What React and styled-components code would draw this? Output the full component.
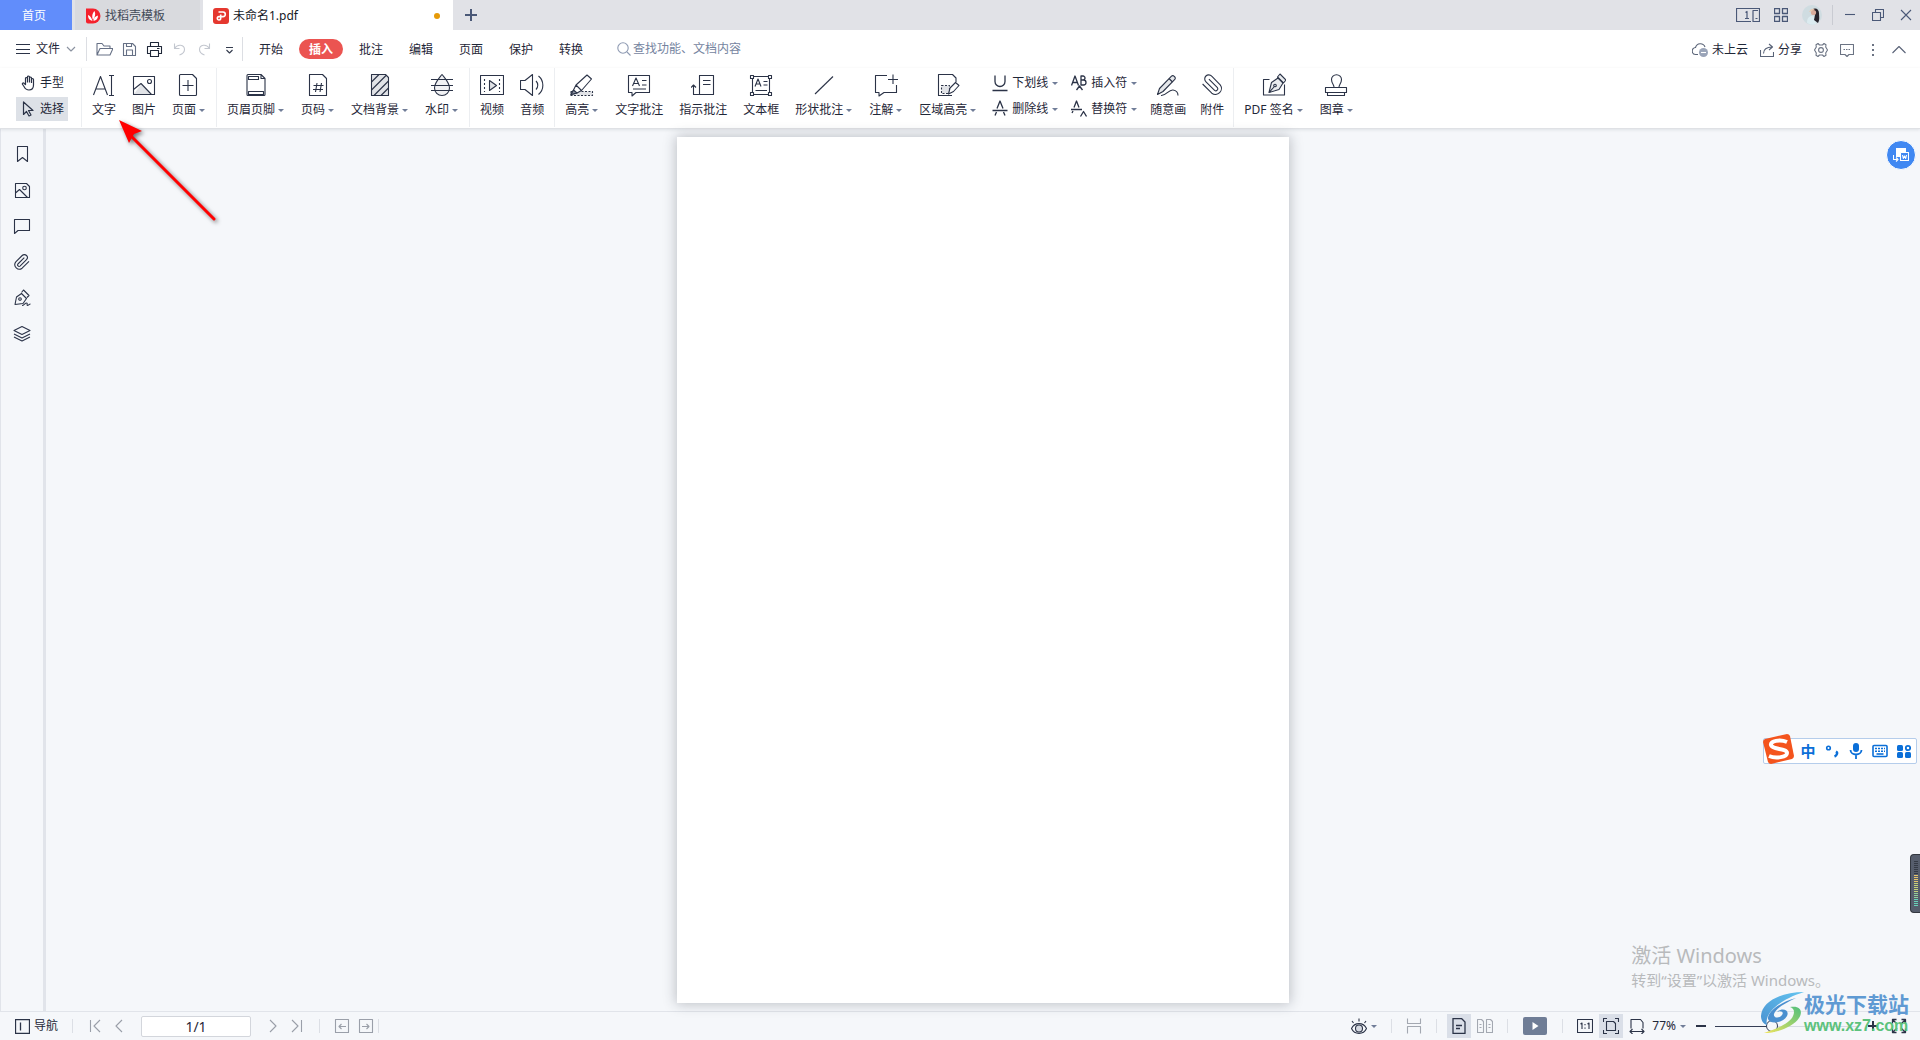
import { useState } from 'react'
import styled, { createGlobalStyle } from 'styled-components'

const GlobalStyle = createGlobalStyle`
  * {
    box-sizing: border-box;
  }

  body {
    margin: 0;
    font-family: 'Noto Sans', 'Noto Sans CJK SC', sans-serif;
    font-size: 12px;
    line-height: 18px;
    color: #1f2738;
  }

  button,
  input {
    font: inherit;
    color: inherit;
  }

  button {
    border: 0;
    padding: 0;
    background: none;
    white-space: nowrap;
    cursor: pointer;
  }
`

const Window = styled.div`
  position: relative;
  display: flex;
  flex-direction: column;
  min-height: 100vh;
  overflow: hidden;
  background: #f5f7fa;
`

const Svg = styled.svg`
  display: block;
  flex: none;
  fill: none;
  stroke: ${({ $color }) => $color || '#2b3347'};
  stroke-width: ${({ $weight }) => $weight || 1.1};
  stroke-linejoin: round;
`

const Icon = ({ w = 24, h, color, weight, children }) => (
  <Svg
    width={w}
    height={h || w}
    viewBox={`0 0 ${w} ${h || w}`}
    $color={color}
    $weight={weight}
    aria-hidden="true"
  >
    {children}
  </Svg>
)

/* title bar */

const TitleBar = styled.header`
  display: flex;
  justify-content: space-between;
  height: 30px;
  background: #e1e2e7;
`

const Tabs = styled.nav`
  display: flex;
  gap: 3px;
`

const HomeTab = styled.button`
  width: 72px;
  padding: 2px 4px 0 0;
  background: #618dfb;
  color: #fff;
`

const FileTab = styled.button`
  display: flex;
  align-items: center;
  gap: 4px;
  width: ${({ $active }) => ($active ? 250 : 125)}px;
  padding: 1px 13px 0 10px;
  background: ${({ $active }) => ($active ? '#fff' : '#d9dade')};
  color: ${({ $active }) => ($active ? '#14181f' : '#434a58')};
`

const UnsavedDot = styled.span`
  width: 6px;
  height: 6px;
  margin-left: auto;
  border-radius: 50%;
  background: #e69a08;
`

const NewTab = styled.button`
  display: grid;
  place-items: center;
  width: 30px;
`

const WindowTools = styled.div`
  display: flex;
  align-items: center;
  gap: 14px;
`

const WindowButtons = styled.div`
  display: flex;
  align-items: center;
  margin-left: -4px;
  padding-left: 3px;
  border-left: 1px solid #c9cbd2;
  height: 20px;
`

const WindowButton = styled.button`
  display: grid;
  place-items: center;
  width: 28px;
  height: 20px;
`

/* menu row */

const MenuBar = styled.div`
  display: flex;
  align-items: center;
  height: 38px;
  padding: 0 14px 0 16px;
  background: #fff;
`

const FileButton = styled.button`
  display: flex;
  align-items: center;
  gap: 6px;
`

const QuickTools = styled.div`
  display: flex;
  margin-left: 10px;
  padding-left: 5px;
  border-left: 1px solid #dcdee3;
`

const QuickButton = styled.button`
  display: grid;
  place-items: center;
  width: 25px;
  height: 24px;
`

const MenuTabs = styled.nav`
  display: flex;
  align-items: center;
  gap: 6px;
  height: 24px;
  padding-left: 6px;
  border-left: 1px solid #dcdee3;
`

const MenuTab = styled.button`
  width: 44px;
  height: 20px;
  padding-top: 1px;
  border-radius: 10px;
  background: ${({ $active }) => ($active ? '#eb5451' : 'none')};
  color: ${({ $active }) => ($active ? '#fff' : 'inherit')};
  font-weight: ${({ $active }) => ($active ? 700 : 400)};
`

const Search = styled.label`
  display: flex;
  align-items: center;
  gap: 2px;
  margin-left: 24px;
`

const SearchInput = styled.input`
  width: 180px;
  padding: 0;
  border: 0;
  outline: 0;
  background: none;

  &::placeholder {
    color: #7584a0;
    opacity: 1;
  }
`

const MenuActions = styled.div`
  display: flex;
  align-items: center;
  gap: 12px;
  margin-left: auto;
  padding-top: 1px;
`

const ActionButton = styled.button`
  display: flex;
  align-items: center;
  gap: 4px;
`

/* ribbon */

const Ribbon = styled.div`
  position: relative;
  display: flex;
  height: 61px;
  padding-left: 16px;
  background: #fff;
  border-bottom: 1px solid #dfe1e5;
  box-shadow: 0 1px 3px rgba(60, 66, 80, 0.12);
`

const RibbonSep = styled.span`
  flex: none;
  width: 1px;
  height: 59px;
  margin: 0 2px;
  background: #eceef1;
`

const ModeGroup = styled.div`
  display: flex;
  flex-direction: column;
  gap: 2px;
  width: 52px;
  margin-right: 11px;
  padding-top: 3px;
`

const ModeButton = styled.button`
  display: flex;
  align-items: center;
  gap: 4px;
  height: 24px;
  padding-left: 4px;
  background: ${({ $active }) => ($active ? '#dde1e7' : 'none')};
`

const RibbonButton = styled.button`
  display: flex;
  flex-direction: column;
  align-items: center;
  gap: 4px;
  height: 54px;
  padding-top: 5px;
  padding-left: ${({ $tight }) => ($tight ? 7 : 8)}px;
  padding-right: ${({ $menu, $tight }) => ($menu ? 9 : $tight ? 7 : 8)}px;
`

const Label = styled.span`
  display: flex;
  align-items: center;
  gap: 3px;
`

const Caret = styled.i`
  width: 0;
  height: 0;
  border: solid transparent;
  border-width: 3px 3px 0;
  border-top-color: #707d98;
`

const MarkGroup = styled.div`
  display: grid;
  grid-template-columns: auto auto;
  align-content: start;
  row-gap: 2px;
  padding-top: 3px;
`

const MarkButton = styled.button`
  display: flex;
  align-items: center;
  gap: 4px;
  height: 24px;
  padding: 0 6px 0 7px;
`

/* work area */

const Body = styled.div`
  display: flex;
  flex: 1;
`

const Sidebar = styled.aside`
  display: flex;
  flex-direction: column;
  align-items: center;
  gap: 12px;
  width: 46px;
  padding: 13px 1px 0 0;
  border-left: 1px solid #e1e4ea;
  border-right: 3px solid #e1e4ea;
`

const SideButton = styled.button`
  display: grid;
  place-items: center;
  width: 24px;
  height: 24px;
`

const Workspace = styled.main`
  position: relative;
  display: flex;
  flex: 1;
  justify-content: center;
  padding: 8px 0;
`

const Page = styled.article`
  aspect-ratio: 612 / 866;
  background: #fff;
  box-shadow: 0 0 12px 1px rgba(40, 46, 60, 0.28);
`

const ConvertButton = styled.button`
  position: absolute;
  top: 11px;
  right: 4px;
  display: grid;
  place-items: center;
  width: 30px;
  height: 30px;
  border: 1px solid #fff;
  border-radius: 50%;
  background: #4088f2;
`

/* status bar */

const StatusBar = styled.footer`
  display: flex;
  align-items: center;
  justify-content: space-between;
  height: 29px;
  padding: 0 9px 0 15px;
  border-top: 1px solid #e1e4ea;
`

const StatusGroup = styled.div`
  display: flex;
  align-items: center;
  gap: ${({ $gap }) => $gap || 0}px;
`

const StatusSep = styled.span`
  width: 1px;
  height: 14px;
  margin: 0 ${({ $space }) => $space}px;
  background: #dcdfe5;
`

const NavButton = styled.button`
  display: flex;
  align-items: center;
  gap: 4px;
  margin-right: 4px;
`

const StatusButton = styled.button`
  display: grid;
  place-items: center;
  width: 24px;
  height: 24px;
  background: ${({ $active }) => ($active ? '#dadfe8' : 'none')};
`

const MenuButton = styled.button`
  display: flex;
  align-items: center;
  gap: 4px;
  padding: 0 ${({ $space }) => $space || 0}px;
`

const PlayButton = styled.button`
  display: grid;
  place-items: center;
  width: 24px;
  height: 18px;
  margin: 0 5px;
  border-radius: 2px;
  background: #6f7d96;
`

const PageInput = styled.input`
  width: 110px;
  height: 21px;
  margin: 0 10px;
  border: 1px solid #d3d6dc;
  border-radius: 2px;
  background: #fff;
  font-size: 14px;
  text-align: center;
`

const ZoomSlider = styled.input`
  appearance: none;
  width: 144px;
  height: 14px;
  margin: 0;
  background: linear-gradient(
      to right,
      #343e55 ${({ $fill }) => $fill}%,
      #d5dae2 ${({ $fill }) => $fill}%
    )
    center / 100% 1px no-repeat;

  &::-webkit-slider-thumb {
    appearance: none;
    width: 12px;
    height: 12px;
    border: 1px solid #343e55;
    border-radius: 50%;
    background: #f5f7fa;
  }
`

/* floating items */

const Pointer = styled.svg`
  position: absolute;
  top: 114px;
  left: 112px;
  pointer-events: none;
  filter: drop-shadow(2px 2px 2px rgba(0, 0, 0, 0.55));
`

const Activation = styled.div`
  position: absolute;
  right: 90px;
  bottom: 49px;
  color: #b8babc;
  font-size: 15px;
  line-height: 22px;
  pointer-events: none;
`

const ActivationTitle = styled.div`
  font-size: 20px;
  line-height: 27px;
`

const SiteMark = styled.div`
  position: absolute;
  right: 11px;
  bottom: 5px;
  display: flex;
  align-items: center;
  pointer-events: none;
`

const SiteName = styled.div`
  color: #5f9ad3;
  font-size: 21px;
  font-weight: 700;
  line-height: 26px;
`

const SiteUrl = styled.div`
  color: #5cc27c;
  font-family: 'Liberation Sans', sans-serif;
  font-size: 16px;
  font-weight: 700;
  line-height: 18px;
`

const InputBar = styled.div`
  position: absolute;
  right: 3px;
  bottom: 276px;
  display: flex;
  align-items: center;
  gap: 8px;
  height: 26px;
  padding: 0 4px 0 36px;
  border: 1px solid #b5cdeb;
  border-radius: 2px;
  background: #fff;
`

const InputLogo = styled.svg`
  position: absolute;
  left: -2px;
  top: -6px;
`

const InputButton = styled.button`
  display: grid;
  place-items: center;
  width: 16px;
  height: 20px;
  color: #0b6fd8;
  font-size: 15px;
  font-weight: 700;
`

const Meter = styled.div`
  position: absolute;
  right: 0;
  bottom: 127px;
  display: flex;
  flex-direction: column;
  gap: 1px;
  width: 10px;
  height: 59px;
  padding: 6px 2px 0 3px;
  border: 1px solid #33373f;
  border-right: 0;
  border-radius: 4px 0 0 4px;
  background: #565d6c;
`

const MeterBar = styled.span`
  height: 1px;
  background: ${({ $color }) => $color};
`

const paperclip =
  'm21.4 11-9.2 9.2a6 6 0 0 1-8.4-8.4l8.5-8.6A4 4 0 1 1 18 8.800l-8.600 8.600a2 2 0 0 1-2.800-2.800l8.500-8.500'

const icons = {
  text: (
    <path d="M1.5 22 8.5 3.5 15.5 22M4 16h9M17 2.5h5M17 22.5h5M19.5 2.5v20" />
  ),
  image: (
    <>
      <path d="M2 21 9 11.5 19 21z" fill="#e1e3e7" stroke="none" />
      <rect x="1.5" y="3.5" width="21" height="18" />
      <path d="M1.5 16.5 9 10.5l10.5 11" />
      <circle cx="17.5" cy="8.5" r="2" />
    </>
  ),
  page: (
    <path d="M3.5 1.5h12l4 4v16a1 1 0 0 1-1 1h-15a1 1 0 0 1-1-1v-19a1 1 0 0 1 1-1zM11 7v11M5.5 12.5h11" />
  ),
  headerFooter: (
    <>
      <path d="M4 1.5h13l4 4v16a1 1 0 0 1-1 1H4a1 1 0 0 1-1-1v-19a1 1 0 0 1 1-1zM17 1.5v4h4" />
      <rect x="4.5" y="3.5" width="10" height="3" />
      <rect x="4.5" y="18.5" width="15" height="3" />
    </>
  ),
  pageNumber: (
    <>
      <path d="M3.5 1.5h13l4 4v17h-17z" />
      <path d="M11 10 9.5 19M15.500 10 14 19M7.500 12.500h10M7 16.500h10" />
    </>
  ),
  background: (
    <>
      <path d="M3.5 1.5h14l3 3v18h-17z" fill="#e1e3e7" />
      <path d="M3.5 9 11 1.5M3.5 17 18 2.5M6 22.500 20.500 8M13 22.500 20.500 15" />
    </>
  ),
  watermark: (
    <>
      <path
        d="M12 1.5c4 5 7.5 8.500 7.500 13.500a7.500 7.500 0 0 1-15 0C4.500 10 8 6.500 12 1.500z"
        fill="#f1f2f4"
      />
      <path d="M1 6.5h22M1 12.5h22M1 17.5h22" />
    </>
  ),
  video: (
    <>
      <rect x=".5" y="2.5" width="23" height="19" />
      <path d="M4.5 6v13M19.5 6v13" strokeDasharray="2 2" />
      <path d="M9.5 7.5v10l7-5z" fill="#e1e3e7" />
    </>
  ),
  audio: (
    <path d="M.5 7.5h4.500l7.500-6v21l-7.500-6H.5zM16 8a6 6 0 0 1 0 8.500M18.500 3a12 12 0 0 1 0 18.500" />
  ),
  highlight: (
    <>
      <path d="M1 18.5h21.500v4H1z" strokeDasharray="2 1.500" fill="#e1e3e7" />
      <path
        d="m6 12 11-10 4.500 4-10 11.500zM6 12l-2.500 5L1 21.500l6-1.500 4.500-2.500z"
        fill="#fff"
      />
      <path d="m3.500 17 3.500 3-6 1.500z" fill="#8a91a0" />
    </>
  ),
  textNote: (
    <path d="M1.500 2.500h21v17H9l-4 3.500v-3.500H1.500zM5.500 13 9 5l3.500 8M6.500 10.500h5M15 7.500h4.500M15 12h4.500M6 16h13" />
  ),
  pointNote: (
    <path d="M8 2.500h14.500v19H6M8.500 2.500v19M12 7.500h7.500M12 11.500h7.500M6 21.500H2.500V12M0 14.500l2.500-2.500L5 14.500" />
  ),
  textBox: (
    <>
      <path d="M3.500 3.500h17v18h-17zM6 13.500 9 6l3 7.500M7 11h4M14.500 8.500h4M14.500 12h4M6.500 17.500h11.500" />
      <path
        d="M1.500 2.500h3v3h-3zM19.500 2.500h3v3h-3zM1.500 19.500h3v3h-3zM19.500 19.500h3v3h-3z"
        fill="#fff"
      />
    </>
  ),
  shape: <path d="M3 21 21 3.500" />,
  comment: (
    <path d="M13 2.500H1.500v17H5V23l5-3.500h12.500V12M14 6.500h10M19 1.500v9.500" />
  ),
  area: (
    <>
      <path d="M20 9V5l-3.500-3.500h-14v21H16" />
      <path d="M5.500 12.500h8v8h-8z" strokeDasharray="2 1.500" fill="#e1e3e7" />
      <path d="m14 15 5.500-5.500 3.500 3-5.500 6-5 2.500z" fill="#fff" />
    </>
  ),
  draw: (
    <>
      <path
        d="M1.500 21.500 3.500 15.500 15.500 3.200a1.600 1.600 0 0 1 2.500 0l.8.800a1.600 1.600 0 0 1 0 2.300L7 18.500z"
        fill="#e6e8eb"
      />
      <path d="m13 5.500 3.500 3.500M5 22.500c5 .5 7.500-6 12-5.500 3.500.500 5 2.500 5 5.500" />
    </>
  ),
  clip: <path d={paperclip} transform="matrix(-1 0 0 1 24 0)" />,
  sign: (
    <>
      <path d="M7.500 6.500H1.500v15.500h21V11.500" />
      <path
        d="m7 19.500 2.500-10L16 5l5 5-4 6.500zM15.500 4l2.500-3 6 6-2.500 3zM7 19.500l5-5.500"
        fill="#e9ebee"
      />
      <circle cx="13" cy="12.500" r="1.300" />
    </>
  ),
  stamp: (
    <path d="M10 14.500c.5-2.500-2.500-4-2.500-8a5 4.800 0 0 1 10 0c0 4-3 5.500-2.500 8zM1.500 14.500h21v5h-21zM3.500 19.500v3h17v-3" />
  ),
}

const RibbonItem = ({ icon, label, menu, tight }) => (
  <RibbonButton $menu={menu} $tight={tight}>
    <Icon>{icons[icon]}</Icon>
    <Label>
      {label}
      {menu && <Caret />}
    </Label>
  </RibbonButton>
)

const MarkItem = ({ label, children }) => (
  <MarkButton>
    <Icon w={16} h={18} weight={1.3}>
      {children}
    </Icon>
    {label}
    <Caret />
  </MarkButton>
)

const ribbonGroups = [
  [
    { icon: 'text', label: '文字' },
    { icon: 'image', label: '图片' },
    { icon: 'page', label: '页面', menu: true },
  ],
  [
    { icon: 'headerFooter', label: '页眉页脚', menu: true },
    { icon: 'pageNumber', label: '页码', menu: true },
    { icon: 'background', label: '文档背景', menu: true },
    { icon: 'watermark', label: '水印', menu: true },
  ],
  [
    { icon: 'video', label: '视频' },
    { icon: 'audio', label: '音频' },
  ],
]

const noteItems = [
  { icon: 'highlight', label: '高亮', menu: true },
  { icon: 'textNote', label: '文字批注' },
  { icon: 'pointNote', label: '指示批注' },
  { icon: 'textBox', label: '文本框' },
  { icon: 'shape', label: '形状批注', menu: true },
  { icon: 'comment', label: '注解', menu: true },
  { icon: 'area', label: '区域高亮', menu: true },
]

const menuTabs = ['开始', '插入', '批注', '编辑', '页面', '保护', '转换']

const quickTools = [
  {
    name: '打开',
    color: '#667085',
    d: 'M1 14V2.500h5l2 2.500h6v2.500M1 14l3-6.500h13L14 14z',
  },
  {
    name: '保存',
    color: '#667085',
    d: 'M2.500 2.500h9l3 3v9h-12zM5.500 14.500V9h6v5.500M5.500 2.500v3h5v-3',
  },
  {
    name: '打印',
    color: '#1f2738',
    d: 'M4.500 5.500v-4h8v4M4 12.500H1.500v-7h14v7H13M4.500 9.500h8v6h-8zM11 7.500h2.500',
  },
  {
    name: '撤销',
    color: '#c3c7cf',
    d: 'M3.500 2.500v5h5M3.500 7.500c3-5 10-4 10 1 0 2.500-2 4.500-5 5.500',
  },
  {
    name: '恢复',
    color: '#c3c7cf',
    d: 'M13.500 2.500v5h-5M13.500 7.500c-3-5-10-4-10 1 0 2.500 2 4.500 5 5.500',
  },
  { name: '更多', color: '#343c4e', d: 'M5 6.500h7M5.500 9l3 3 3-3' },
]

const sideItems = [
  { name: '书签', d: 'M4.500 1.500h10v15l-5-4-5 4z' },
  {
    name: '缩略图',
    d: 'M2.500 2.500h11l3 3v11h-14zM2.500 12l4-3.500 8 8M9.700 7a1.800 1.800 0 1 0 3.600 0 1.800 1.800 0 1 0-3.600 0',
  },
  { name: '批注', d: 'M1.500 2.500h15v11H5l-3.500 3z' },
  {
    name: '附件',
    d: 'M16 8.300 9.100 15.200a4.500 4.500 0 0 1-6.300-6.300L9.200 2.500a3 3 0 0 1 4.300 0a3 3 0 0 1 0 4.200L7 13.100a1.500 1.500 0 0 1-2.100-2.100l6.400-6.400',
  },
  {
    name: '签名',
    d: 'M2 15.500 3.500 8l5-3.500 5 5-3.500 5zM8.500 3.500l2-2.500 5.500 5.500-2 2M5.700 10a1.300 1.300 0 1 0 2.600 0 1.300 1.300 0 1 0-2.600 0M9 16.500c2 0 3-2.500 4.500-2.500s0 2.500 1 2.500 1.500-1.500 3-1.500',
  },
  { name: '图层', d: 'm9 1.500 8 4-8 4-8-4zM1 9l8 4 8-4M1 12l8 4 8-4' },
]

const pagerIcons = {
  first: 'M3.500 2v12M13 2 7 8l6 6',
  prev: 'M11 2 5 8l6 6',
  next: 'm5 2 6 6-6 6',
  last: 'm3 2 6 6-6 6M12.500 2v12',
  back: 'M1.500 1.500h13v13h-13zM12 8.500H5M7.500 6 5 8.500 7.500 11',
  forward: 'M1.500 1.500h13v13h-13zM4 8.500h7M8.500 6 11 8.500 8.500 11',
}

const PagerButton = ({ icon, name }) => (
  <StatusButton aria-label={name}>
    <Icon w={16} color="#9a9fa9">
      <path d={pagerIcons[icon]} />
    </Icon>
  </StatusButton>
)

const meterColors = [
  ...Array(7).fill('#353a45'),
  ...Array(4).fill('#e6c46a'),
  ...Array(5).fill('#c4d17a'),
  ...Array(3).fill('#93cf9a'),
  ...Array(4).fill('#68d2b8'),
]

const App = () => {
  const [menuTab, setMenuTab] = useState('插入')
  const [zoom, setZoom] = useState(77)

  return (
    <Window>
      <GlobalStyle />
      <TitleBar>
        <Tabs>
          <HomeTab>首页</HomeTab>
          <FileTab>
            <Icon w={16}>
              <path
                d="M1 .5h7a7.500 7.500 0 1 1 0 15H3a2 2 0 0 1-2-2z"
                fill="#f5222d"
                stroke="none"
              />
              <path
                d="M7.500 13C4 12 3 10 3 7c2 .5 3.500 2.500 4.500 6zM8 12C6.500 8 7.500 5 9.500 3c1.500 3 .5 6-1.500 9zM8.500 13c0-3 2-5 4.500-5.500 0 3-1.500 5-4.500 5.500z"
                fill="#fff"
                stroke="none"
              />
            </Icon>
            找稻壳模板
          </FileTab>
          <FileTab $active>
            <Icon w={16}>
              <rect width="16" height="16" rx="3" fill="#e5382f" stroke="none" />
              <path
                d="M5.500 4h4.500a2.300 2.300 0 0 1 0 4.600H6a1.700 1.700 0 1 0 1.700 1.700V6.500"
                stroke="#fff"
                strokeWidth="1.600"
              />
            </Icon>
            未命名1.pdf
            <UnsavedDot />
          </FileTab>
          <NewTab aria-label="新建">
            <Icon w={12} color="#4a5877" weight={2}>
              <path d="M6 0v12M0 6h12" />
            </Icon>
          </NewTab>
        </Tabs>
        <WindowTools>
          <Icon w={24} h={14} color="#4a5877" weight={1.2}>
            <path d="M15 13.500H.5V.5h23v13h-6.500v-11h5M19.500 10.500h2M9.500 4.500l1.500-1V10M9 10.500h4" />
          </Icon>
          <Icon w={14} color="#4a5877" weight={1.3}>
            <path d="M.5.5h5v5h-5zM8.500.5h5v5h-5zM.5 8.500h5v5h-5zM8.500 8.500h5v5h-5z" />
          </Icon>
          <Icon w={20}>
            <g stroke="none">
              <circle cx="10" cy="10" r="10" fill="#cfdce1" />
              <path d="M5 18c0-5 2-7 5-7l3 1 1 7a10 10 0 0 1-9-1z" fill="#dcebf0" />
              <path d="M10 5c3-3 7-1 7 3 0 3 1 7-1 10l-4-3 1-5z" fill="#26222b" />
              <circle cx="11.500" cy="7.500" r="2.600" fill="#d9ab9b" />
              <path d="M7 7c1-3 4-4 6-3l-3 2z" fill="#e8c9b0" />
            </g>
          </Icon>
          <WindowButtons>
            <WindowButton aria-label="最小化">
              <Icon w={12} color="#4a5877">
                <path d="M1 5.500h10" />
              </Icon>
            </WindowButton>
            <WindowButton aria-label="还原">
              <Icon w={12} color="#4a5877">
                <path d="M.5 3.500h8v8h-8zM3.500 3.500v-3h8v8h-3" />
              </Icon>
            </WindowButton>
            <WindowButton aria-label="关闭">
              <Icon w={12} color="#4a5877">
                <path d="m1 1 10 10M11 1 1 11" />
              </Icon>
            </WindowButton>
          </WindowButtons>
        </WindowTools>
      </TitleBar>

      <MenuBar>
        <FileButton>
          <Icon w={14} weight={1}>
            <path d="M0 2.500h14M0 7.500h14M0 11.500h14" />
          </Icon>
          文件
          <Icon w={10} color="#8b92a0">
            <path d="m1 3 4 4 4-4" />
          </Icon>
        </FileButton>
        <QuickTools>
          {quickTools.map((t) => (
            <QuickButton key={t.name} aria-label={t.name}>
              <Icon w={17} color={t.color}>
                <path d={t.d} />
              </Icon>
            </QuickButton>
          ))}
        </QuickTools>
        <MenuTabs>
          {menuTabs.map((t) => (
            <MenuTab key={t} $active={t === menuTab} onClick={() => setMenuTab(t)}>
              {t}
            </MenuTab>
          ))}
        </MenuTabs>
        <Search>
          <Icon w={14} color="#8f9bb3">
            <circle cx="6" cy="6" r="5.200" />
            <path d="m10 10 3.500 3.500" />
          </Icon>
          <SearchInput placeholder="查找功能、文档内容" aria-label="查找" />
        </Search>
        <MenuActions>
          <ActionButton>
            <Icon w={16} color="#596377">
              <path d="M6 12.500H4a3.500 3.500 0 0 1-.500-7 5 5 0 0 1 9.500-.500" />
              <circle cx="11.500" cy="10.500" r="4.500" fill="#9aa4b8" stroke="none" />
              <path d="M9 10.500h5" stroke="#fff" />
            </Icon>
            未上云
          </ActionButton>
          <ActionButton>
            <Icon w={14} color="#596377">
              <path d="M.5 7v6.500h13V9M3.500 10.500c0-4 3-6.500 8.500-6.500M9 1l3.500 3L9 7" />
            </Icon>
            分享
          </ActionButton>
          <ActionButton aria-label="设置">
            <Icon w={14} color="#6b7383">
              <path d="M4 .5 5.500 2h3L10 .5l2 1.200-.300 2.300L13.500 7l-1.800 3 .3 2.300-2 1.200L8.500 12h-3L4 13.500l-2-1.200.3-2.300L.5 7l1.800-3L2 1.700z" />
              <circle cx="7" cy="7" r="2.400" />
            </Icon>
          </ActionButton>
          <ActionButton aria-label="反馈">
            <Icon w={14} color="#6b7383">
              <path d="M.5 1.500h13v10H9l-2 2-2-2H.5z" />
              <path d="M3.500 6.500h7" strokeDasharray="1.500 1" />
            </Icon>
          </ActionButton>
          <ActionButton aria-label="更多">
            <Icon w={14}>
              <path d="M6 1h2v2H6zM6 6h2v2H6zM6 11h2v2H6z" fill="#6b7383" stroke="none" />
            </Icon>
          </ActionButton>
          <ActionButton aria-label="收起功能区">
            <Icon w={14} color="#596377">
              <path d="m.5 10 6.500-6.500 6.500 6.500" />
            </Icon>
          </ActionButton>
        </MenuActions>
      </MenuBar>

      <Ribbon>
        <ModeGroup>
          <ModeButton>
            <Icon w={16} weight={1.2}>
              <path d="M5.500 8.500v-5a1 1 0 0 1 2 0V7.500M7.500 7V2a1 1 0 0 1 2 0v5.500M9.500 7V3a1 1 0 0 1 2 0v5M11.500 8V4.500a1 1 0 0 1 2 0V10c0 3-1.500 5-4.500 5-3 0-4-1.500-5-3.500L2.300 9a1 1 0 0 1 1.700-.8l1.500 1.500v-2" />
            </Icon>
            手型
          </ModeButton>
          <ModeButton $active>
            <Icon w={16} weight={1.2}>
              <path d="M3.500 1v12.500L6.500 10.500l2.500 4.500 2-1-2.500-4.500H13z" />
            </Icon>
            选择
          </ModeButton>
        </ModeGroup>
        <RibbonSep />
        {ribbonGroups.map((group) => [
          ...group.map((item) => <RibbonItem key={item.label} {...item} />),
          <RibbonSep key={`${group[0].label}-sep`} />,
        ])}
        {noteItems.map((item) => (
          <RibbonItem key={item.label} {...item} />
        ))}
        <MarkGroup>
          <MarkItem label="下划线">
            <path d="M3 1.500v6a5 5 0 0 0 10 0v-6M.5 16.500h15" />
          </MarkItem>
          <MarkItem label="插入符">
            <path d="M.5 11.500 4 2l3.500 9.500M1.500 8.500h5M10 2v9h2.500a2.500 2.500 0 0 0 0-5H10h2a2 2 0 0 0 0-4zM5.500 16 8.500 12l3 4" />
          </MarkItem>
          <MarkItem label="删除线">
            <path d="M.5 10.500h15M5 8.500 8 1l3 7.500M3 15.500 4.500 12M13 15.500 11.500 12" />
          </MarkItem>
          <MarkItem label="替换符">
            <path d="M0 9.500h11M1 13l1-2M3 7.500 5.500 1 8 7.500M9.500 16.500l3-5 3 5" />
          </MarkItem>
        </MarkGroup>
        <RibbonItem icon="draw" label="随意画" tight />
        <RibbonItem icon="clip" label="附件" tight />
        <RibbonSep />
        <RibbonItem icon="sign" label="PDF 签名" menu />
        <RibbonItem icon="stamp" label="图章" menu />
      </Ribbon>

      <Body>
        <Sidebar>
          {sideItems.map((s) => (
            <SideButton key={s.name} aria-label={s.name}>
              <Icon w={18}>
                <path d={s.d} />
              </Icon>
            </SideButton>
          ))}
        </Sidebar>
        <Workspace>
          <Page />
          <ConvertButton aria-label="转换">
            <Icon w={16} color="#fff">
              <path d="M3 1h10v4H7v5H3z" fill="#fff" stroke="none" />
              <path d="M7.500 5.500h8v8h-8zM9.500 8l.8 3.500L11.500 9l1.200 2.500.8-3.500M.5 8v4.500H4M3 10.500l2 2-2 2" />
            </Icon>
          </ConvertButton>
        </Workspace>
      </Body>

      <StatusBar>
        <StatusGroup>
          <NavButton>
            <Icon w={15} weight={1.3}>
              <path d="M.5.5h14v14H.5zM5.500 3.500v8" />
            </Icon>
            导航
          </NavButton>
          <StatusSep $space={10} />
          <PagerButton icon="first" name="第一页" />
          <PagerButton icon="prev" name="上一页" />
          <PageInput defaultValue="1/1" aria-label="页码" />
          <PagerButton icon="next" name="下一页" />
          <PagerButton icon="last" name="最后一页" />
          <StatusSep $space={10} />
          <PagerButton icon="back" name="后退" />
          <PagerButton icon="forward" name="前进" />
          <StatusSep $space={0} />
        </StatusGroup>
        <StatusGroup $gap={2}>
          <MenuButton $space={4} aria-label="护眼模式">
            <Icon w={16}>
              <path d="M.5 10.500c3-6.500 12-6.500 15 0-3 6.500-12 6.500-15 0zM8 .5v3M1 3l1.500 2M15 3l-1.500 2" />
              <circle cx="8" cy="10.500" r="3.500" fill="#d5d9e1" />
            </Icon>
            <Caret />
          </MenuButton>
          <StatusSep $space={8} />
          <StatusButton aria-label="分页">
            <Icon w={16} color="#a3a8b1">
              <path d="M1.500.5v5h13v-5M1.500 15.500v-7h13v7" />
            </Icon>
          </StatusButton>
          <StatusSep $space={8} />
          <StatusButton $active aria-label="单页">
            <Icon w={16} weight={1.3}>
              <path d="M2 .5h8.500L14 4v11.500H2zM5 7.500h6M5 10.500h4" />
            </Icon>
          </StatusButton>
          <StatusButton aria-label="双页">
            <Icon w={16} color="#a3a8b1">
              <path d="M.5 1.500h4l2 2v11h-6zM9.500 1.500h4l2 2v11h-6zM2.500 6.500h2M2.500 9.500h2M11.500 6.500h2M11.500 9.500h2" />
            </Icon>
          </StatusButton>
          <StatusSep $space={8} />
          <PlayButton aria-label="播放">
            <Icon w={8} h={10}>
              <path d="M1.500 1v8L7.500 5z" fill="#fff" stroke="none" />
            </Icon>
          </PlayButton>
          <StatusSep $space={8} />
          <StatusButton aria-label="实际大小">
            <Icon w={16}>
              <path d="M.5 1.500h15v13H.5zM3.500 6l1.500-1v6M10.500 6 12 5v6M8 6v1.200M8 9.500v1.200" />
            </Icon>
          </StatusButton>
          <StatusButton $active aria-label="适合页面">
            <Icon w={16}>
              <path d="M3.500 3.500h7l2 2v7h-9zM.5 4V.5H4M12 .5h3.500V4M15.500 12v3.500H12M4 15.500H.5V12" />
            </Icon>
          </StatusButton>
          <StatusButton aria-label="适合宽度">
            <Icon w={16}>
              <path d="M2 10.500V1.500h9.500l2.500 3v6M1 13.500h14M3.500 11 1 13.500 3.500 16M12.500 11l2.500 2.500-2.500 2.500" />
            </Icon>
          </StatusButton>
          <MenuButton $space={1}>
            {zoom}%
            <Caret />
          </MenuButton>
          <StatusButton aria-label="缩小" onClick={() => setZoom(zoom - 1)}>
            <Icon w={12} weight={2}>
              <path d="M1 6h10" />
            </Icon>
          </StatusButton>
          <ZoomSlider
            type="range"
            min="0"
            max="200"
            aria-label="缩放"
            value={zoom}
            $fill={zoom / 2}
            onChange={(e) => setZoom(Number(e.target.value))}
          />
          <StatusButton aria-label="放大" onClick={() => setZoom(zoom + 1)}>
            <Icon w={12} weight={2}>
              <path d="M1 6h10M6 1v10" />
            </Icon>
          </StatusButton>
          <StatusButton aria-label="全屏">
            <Icon w={16} weight={1.3}>
              <path d="M1.500 5.500v-4h4M10.500 1.500h4v4M14.500 10.500v4h-4M5.500 14.500h-4v-4M2 2l4 4M14 2l-4 4M14 14l-4-4M2 14l4-4" />
            </Icon>
          </StatusButton>
        </StatusGroup>
      </StatusBar>

      <Pointer width="112" height="114" viewBox="0 0 112 114" aria-hidden="true">
        <path d="M18 21 102 105" stroke="#f00" strokeWidth="3" strokeLinecap="round" />
        <path d="M7 6 30 17l-8 3-5 9z" fill="#f00" />
      </Pointer>

      <Activation>
        <ActivationTitle>激活 Windows</ActivationTitle>
        转到“设置”以激活 Windows。
      </Activation>

      <SiteMark>
        <svg width="44" height="44" viewBox="0 0 44 44" aria-hidden="true">
          <defs>
            <linearGradient id="swirlBlue" x1="0" y1="1" x2="1" y2="0">
              <stop offset="0" stopColor="#4a93d2" />
              <stop offset="1" stopColor="#63c4f0" />
            </linearGradient>
            <linearGradient id="swirlGreen" x1="0" y1="1" x2="1" y2="0">
              <stop offset="0" stopColor="#f1e55c" />
              <stop offset="1" stopColor="#4fbf7c" />
            </linearGradient>
          </defs>
          <path d="M44 1C22 1 2 10 1 25c0 4 2 8 6 9C4 24 16 10 44 1z" fill="url(#swirlBlue)" />
          <path
            d="M36 7C20 11 7 21 8 28c2 6 15 4 19-3 3-6-5-9-10-4 5-2 7 1 5 3-3 4-9 3-8-1 1-5 11-11 22-16z"
            fill="#4a8fcf"
          />
          <path
            d="M30 16c11-2 13 5 9 11C33 36 17 42 4 42c13-4 26-10 29-17 2-4 1-8-3-9z"
            fill="url(#swirlGreen)"
          />
        </svg>
        <div>
          <SiteName>极光下载站</SiteName>
          <SiteUrl>www.xz7.com</SiteUrl>
        </div>
      </SiteMark>

      <InputBar>
        <InputLogo width="32" height="32" viewBox="0 0 32 32" aria-hidden="true">
          <path
            d="M3 6 25 1q2 0 3 2l4 20q0 2-2 3L9 31q-2 0-3-2L1 9q0-2 2-3z"
            fill="#f4541d"
          />
          <path
            d="M25 9C18 6 8 8 9 12c1 5 16 3 16 8 0 4-11 6-18 3"
            fill="none"
            stroke="#fff"
            strokeWidth="4"
          />
        </InputLogo>
        <InputButton>中</InputButton>
        <InputButton aria-label="标点">
          <Icon w={16} color="#0b6fd8" weight={1.6}>
            <circle cx="4.500" cy="5" r="1.800" />
            <path d="M12 8.500c2 1 1 4-1.500 5" strokeWidth="2.500" />
          </Icon>
        </InputButton>
        <InputButton aria-label="语音">
          <Icon w={16} color="#0b6fd8" weight={1.8}>
            <rect x="5" y="0" width="6" height="9" rx="3" fill="#0b6fd8" stroke="none" />
            <path d="M2.500 7c0 6 11 6 11 0M8 11.500V16" />
          </Icon>
        </InputButton>
        <InputButton aria-label="键盘">
          <Icon w={16} color="#0b6fd8" weight={1.6}>
            <rect x="1" y="2.500" width="14" height="11" rx="1" />
            <path d="M3 5.500h10M3 8.200h10" strokeDasharray="2 1" />
            <path d="M4.500 11h7" />
          </Icon>
        </InputButton>
        <InputButton aria-label="工具箱">
          <Icon w={14}>
            <g fill="#0b6fd8" stroke="none">
              <rect x="0" y="1" width="6" height="6" rx="1.500" />
              <rect x="0" y="8" width="6" height="6" rx="1.500" />
              <rect x="8" y="8" width="6" height="6" rx="1.500" />
            </g>
            <circle cx="11" cy="4" r="2.200" stroke="#0b6fd8" strokeWidth="1.800" />
          </Icon>
        </InputButton>
      </InputBar>

      <Meter>
        {meterColors.map((color, i) => (
          <MeterBar key={i} $color={color} />
        ))}
      </Meter>
    </Window>
  )
}

export default App
